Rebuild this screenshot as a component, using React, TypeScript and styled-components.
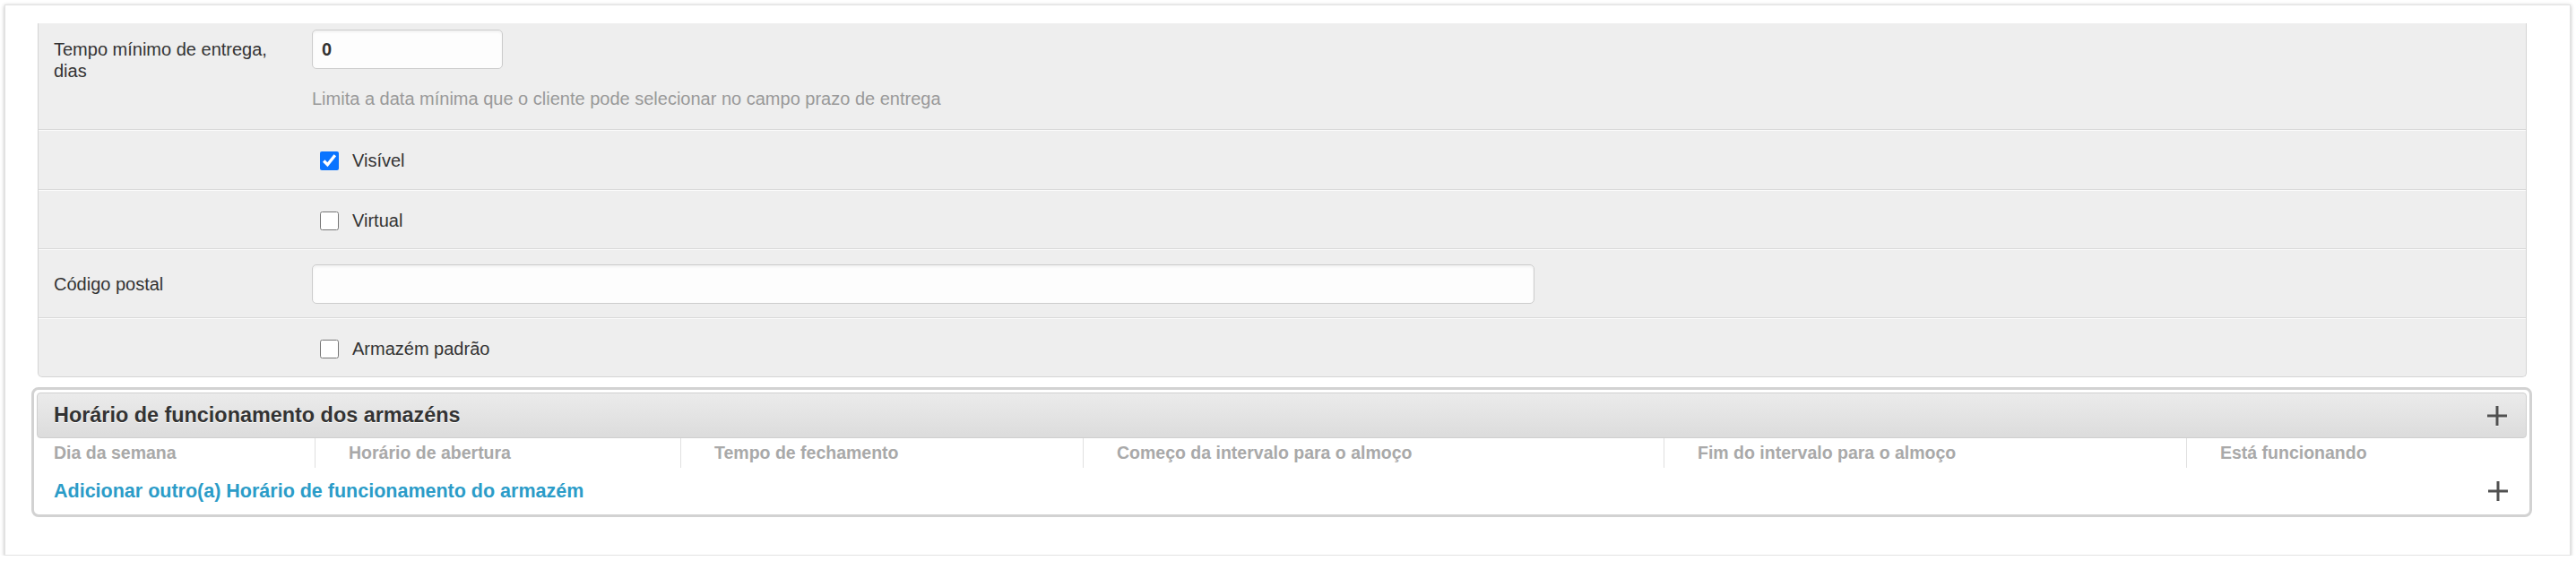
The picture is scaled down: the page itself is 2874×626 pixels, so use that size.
import React from "react";
import styled, { createGlobalStyle } from "styled-components";

const GlobalStyle = createGlobalStyle`
  body {
    margin: 0;
    background: #fff;
    font-family: "Liberation Sans", Arial, sans-serif;
    color: #333;
  }
`;

const columns = [
  { title: "Dia da semana", width: 310 },
  { title: "Horário de abertura", width: 408 },
  { title: "Tempo de fechamento", width: 449 },
  { title: "Começo da intervalo para o almoço", width: 648 },
  { title: "Fim do intervalo para o almoço", width: 583 },
  { title: "Está funcionando", width: 380 },
];

const PlusIcon = () => (
  <PlusSvg width="24" height="24" viewBox="0 0 24 24">
    <rect x="10.5" y="1" width="3" height="22" fill="#fff" opacity="0.6" transform="translate(0 1)" />
    <rect x="1" y="10.5" width="22" height="3" fill="#fff" opacity="0.6" transform="translate(0 1)" />
    <rect x="10.5" y="1" width="3" height="22" fill="#505050" />
    <rect x="1" y="10.5" width="22" height="3" fill="#505050" />
  </PlusSvg>
);

const App = () => {
  return (
    <>
      <GlobalStyle />
      <Card>
        <Panel>
          <Row height={119} align="start">
            <Label multiline>Tempo mínimo de entrega, dias</Label>
            <Field>
              <TextInput width={213} bold defaultValue="0" />
              <Hint>Limita a data mínima que o cliente pode selecionar no campo prazo de entrega</Hint>
            </Field>
          </Row>
          <Row height={67}>
            <span />
            <CheckLabel>
              <Check type="checkbox" defaultChecked />
              Visível
            </CheckLabel>
          </Row>
          <Row height={66}>
            <span />
            <CheckLabel>
              <Check type="checkbox" />
              Virtual
            </CheckLabel>
          </Row>
          <Row height={77}>
            <Label>Código postal</Label>
            <Field>
              <TextInput width={1364} />
            </Field>
          </Row>
          <Row height={65} last>
            <span />
            <CheckLabel>
              <Check type="checkbox" />
              Armazém padrão
            </CheckLabel>
          </Row>
        </Panel>

        <Section>
          <SectionHeader>
            <SectionTitle>Horário de funcionamento dos armazéns</SectionTitle>
            <PlusIcon />
          </SectionHeader>
          <HeadRow>
            {columns.map((c, i) => (
              <HeadCell key={c.title} first={i === 0} style={{ width: c.width }}>
                {c.title}
              </HeadCell>
            ))}
          </HeadRow>
          <AddRow>
            <AddLink href="#">Adicionar outro(a) Horário de funcionamento do armazém</AddLink>
            <PlusIcon />
          </AddRow>
        </Section>
      </Card>
    </>
  );
};

export default App;

const Card = styled.div`
  box-sizing: border-box;
  margin: 5px 6px 0 5px;
  height: 615px;
  background: #fff;
  border: 1px solid #e2e2e2;
  box-shadow: 0 1px 4px rgba(0, 0, 0, 0.28);
  padding: 20px 42px 0 29px;
`;

const Panel = styled.div`
  margin: 0 6px 0 7px;
  background: #eeeeee;
  border: 1px solid #d4d4d4;
  border-top: none;
  border-radius: 0 0 5px 5px;
`;

const Row = styled.div<{ height: number; align?: string; last?: boolean }>`
  box-sizing: border-box;
  height: ${(p) => p.height}px;
  display: grid;
  grid-template-columns: 305px 1fr;
  align-items: ${(p) => p.align || "center"};
  border-top: 1px solid #fbfbfb;
  border-bottom: ${(p) => (p.last ? "none" : "1px solid #d9d9d9")};
  &:first-child {
    border-top: none;
    padding-top: 7px;
  }
`;

const Label = styled.div<{ multiline?: boolean }>`
  padding-left: 17px;
  padding-right: 40px;
  padding-top: ${(p) => (p.multiline ? "10px" : "0")};
  font-size: 20px;
  line-height: 24px;
  color: #333;
`;

const Field = styled.div`
  display: flex;
  flex-direction: column;
  align-items: flex-start;
`;

const TextInput = styled.input<{ width: number; bold?: boolean }>`
  box-sizing: border-box;
  width: ${(p) => p.width}px;
  height: 44px;
  padding: 0 10px;
  border: 1px solid #cccccc;
  border-radius: 5px;
  background: #fdfdfd;
  box-shadow: inset 0 2px 3px rgba(0, 0, 0, 0.05);
  font-family: "Liberation Sans", Arial, sans-serif;
  font-size: 20px;
  font-weight: ${(p) => (p.bold ? 700 : 400)};
  color: #333;
  outline: none;
`;

const Hint = styled.div`
  margin-top: 21px;
  font-size: 20px;
  line-height: 24px;
  color: #999;
`;

const CheckLabel = styled.label`
  display: flex;
  align-items: center;
  gap: 15px;
  padding-left: 9px;
  padding-top: 2px;
  font-size: 20px;
  color: #333;
`;

const Check = styled.input`
  width: 21px;
  height: 21px;
  margin: 0;
  accent-color: #0a74ff;
`;

const Section = styled.div`
  box-sizing: border-box;
  margin-top: 11px;
  height: 145px;
  border: 3px solid #d2d2d2;
  border-radius: 8px;
  padding: 3px 3px 0 3px;
`;

const SectionHeader = styled.div`
  box-sizing: border-box;
  height: 51px;
  display: flex;
  align-items: center;
  justify-content: space-between;
  padding: 0 20px 0 18px;
  border: 1px solid #cfcfcf;
  border-radius: 4px;
  background: linear-gradient(to bottom, #ebebeb, #dcdcdc);
`;

const SectionTitle = styled.div`
  font-size: 23.4px;
  font-weight: 700;
  color: #333;
  text-shadow: 0 1px 0 #fff;
`;

const PlusSvg = styled.svg`
  display: block;
`;

const HeadRow = styled.div`
  display: flex;
  height: 33px;
`;

const HeadCell = styled.div<{ first?: boolean }>`
  box-sizing: border-box;
  display: flex;
  align-items: center;
  flex-shrink: 0;
  padding-left: ${(p) => (p.first ? "19px" : "37px")};
  border-left: ${(p) => (p.first ? "none" : "1px solid #e0e0e0")};
  font-size: 19.5px;
  font-weight: 700;
  color: #a9a9a9;
  white-space: nowrap;
`;

const AddRow = styled.div`
  display: flex;
  align-items: center;
  justify-content: space-between;
  height: 52px;
  padding: 0 20px 0 19px;
`;

const AddLink = styled.a`
  font-size: 21.5px;
  font-weight: 700;
  color: #2b9cc8;
  text-decoration: none;
`;
